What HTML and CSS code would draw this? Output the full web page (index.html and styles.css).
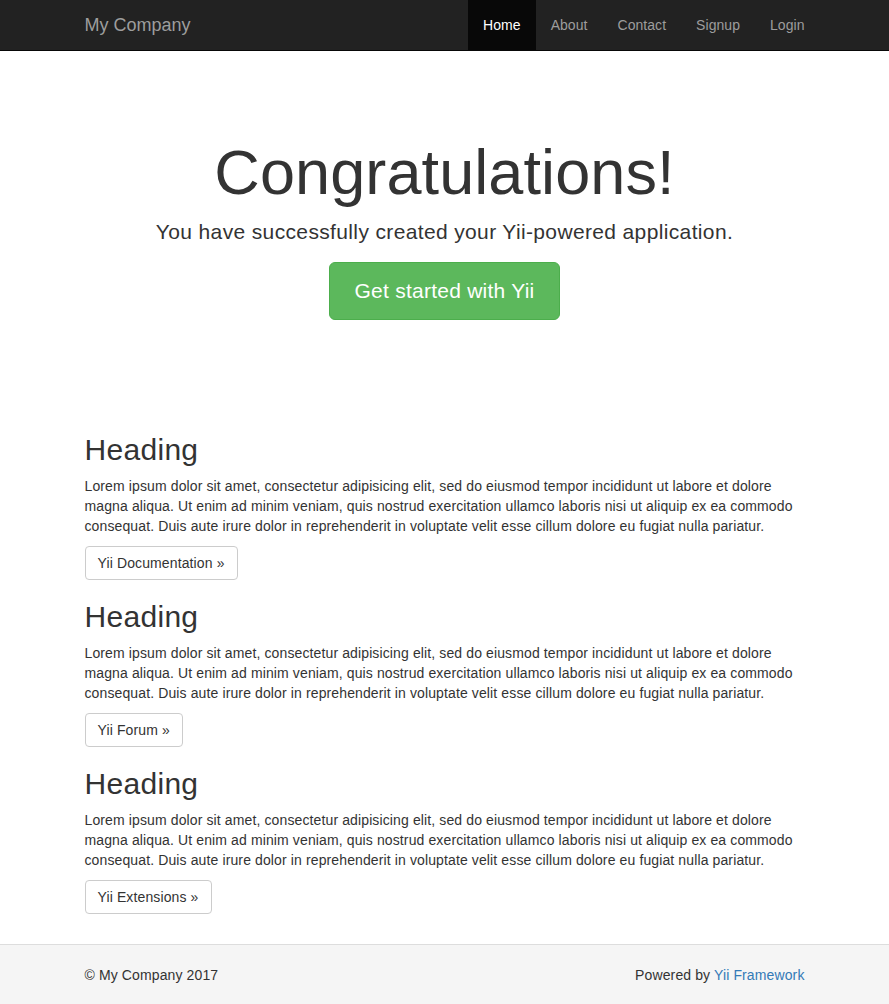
FILE: index.html
```html
<!DOCTYPE html>
<html lang="en">
<head>
<meta charset="utf-8">
<title>My Yii Application</title>
<link rel="stylesheet" href="styles.css">
</head>
<body>
<div class="wrap">
  <nav class="navbar">
    <div class="container nav-inner">
      <a class="brand" href="#">My Company</a>
      <ul class="nav">
        <li class="active"><a href="#">Home</a></li>
        <li><a href="#">About</a></li>
        <li><a href="#">Contact</a></li>
        <li><a href="#">Signup</a></li>
        <li><a href="#">Login</a></li>
      </ul>
    </div>
  </nav>
  <div class="container main">
    <div class="jumbotron">
      <h1>Congratulations!</h1>
      <p class="lead">You have successfully created your Yii-powered application.</p>
      <p class="cta"><a class="btn btn-lg btn-success" href="#">Get started with Yii</a></p>
    </div>
    <div class="body-content">
      <div class="col">
        <h2>Heading</h2>
        <p>Lorem ipsum dolor sit amet, consectetur adipisicing elit, sed do eiusmod tempor incididunt ut labore et dolore magna aliqua. Ut enim ad minim veniam, quis nostrud exercitation ullamco laboris nisi ut aliquip ex ea commodo consequat. Duis aute irure dolor in reprehenderit in voluptate velit esse cillum dolore eu fugiat nulla pariatur.</p>
        <p><a class="btn btn-default" href="#">Yii Documentation &raquo;</a></p>
      </div>
      <div class="col">
        <h2>Heading</h2>
        <p>Lorem ipsum dolor sit amet, consectetur adipisicing elit, sed do eiusmod tempor incididunt ut labore et dolore magna aliqua. Ut enim ad minim veniam, quis nostrud exercitation ullamco laboris nisi ut aliquip ex ea commodo consequat. Duis aute irure dolor in reprehenderit in voluptate velit esse cillum dolore eu fugiat nulla pariatur.</p>
        <p><a class="btn btn-default" href="#">Yii Forum &raquo;</a></p>
      </div>
      <div class="col">
        <h2>Heading</h2>
        <p>Lorem ipsum dolor sit amet, consectetur adipisicing elit, sed do eiusmod tempor incididunt ut labore et dolore magna aliqua. Ut enim ad minim veniam, quis nostrud exercitation ullamco laboris nisi ut aliquip ex ea commodo consequat. Duis aute irure dolor in reprehenderit in voluptate velit esse cillum dolore eu fugiat nulla pariatur.</p>
        <p><a class="btn btn-default" href="#">Yii Extensions &raquo;</a></p>
      </div>
    </div>
  </div>
</div>
<footer class="footer">
  <div class="container foot-inner">
    <p class="left">&copy; My Company 2017</p>
    <p class="right">Powered by <a href="#">Yii Framework</a></p>
  </div>
</footer>
</body>
</html>
```
FILE: styles.css
```css
* { box-sizing: border-box; }
html, body { margin: 0; padding: 0; }
body {
  font-family: "Liberation Sans", Arial, Helvetica, sans-serif;
  font-size: 14px;
  line-height: 1.42857143;
  letter-spacing: 0.12px;
  color: #333;
  background: #fff;
}
a { text-decoration: none; }
p { margin: 0 0 10px; }

.container {
  width: 750px;
  margin: 0 auto;
  padding: 0 15px;
}

.navbar {
  background: #222;
  border-bottom: 1px solid #080808;
  height: 51px;
}
.nav-inner {
  display: flex;
  justify-content: space-between;
  align-items: stretch;
  height: 50px;
}
.brand {
  font-size: 18px;
  line-height: 20px;
  letter-spacing: 0;
  padding: 15px 0;
  color: #9d9d9d;
}
.nav {
  display: flex;
  list-style: none;
  margin: 0 -15px 0 0;
  padding: 0;
}
.nav li a {
  display: block;
  padding: 15px;
  line-height: 20px;
  letter-spacing: 0.05px;
  color: #9d9d9d;
}
.nav li.active a {
  color: #fff;
  background: #080808;
}

.main {
  padding-top: 19px;
  padding-bottom: 20px;
}

.jumbotron {
  text-align: center;
  padding: 48px 60px;
  margin-bottom: 30px;
}
.jumbotron h1 {
  font-size: 63px;
  font-weight: 500;
  line-height: 1.1;
  letter-spacing: 0.1px;
  margin: 20px 0 10px;
  color: #333;
}
.jumbotron p {
  font-size: 21px;
  margin-bottom: 15px;
}
.jumbotron .lead {
  line-height: 30px;
  letter-spacing: 0.36px;
}

.btn {
  display: inline-block;
  border: 1px solid transparent;
  border-radius: 4px;
  padding: 6px 12px;
  font-size: 14px;
  line-height: 20px;
  white-space: nowrap;
}
.btn-lg {
  font-size: 21px;
  padding: 14px 24px;
  line-height: 28px;
  letter-spacing: 0.25px;
  border-radius: 6px;
}
.btn-success {
  color: #fff;
  background: #5cb85c;
  border-color: #4cae4c;
}
.btn-default {
  color: #333;
  background: #fff;
  border-color: #ccc;
}

.body-content {
  display: flow-root;
}
.body-content h2 {
  font-size: 30px;
  font-weight: 500;
  line-height: 1.1;
  letter-spacing: 0.3px;
  margin: 20px 0 10px;
}

.footer {
  height: 60px;
  background: #f5f5f5;
  border-top: 1px solid #ddd;
  padding-top: 20px;
}
.foot-inner {
  display: flex;
  justify-content: space-between;
}
.footer a { color: #337ab7; }
```
